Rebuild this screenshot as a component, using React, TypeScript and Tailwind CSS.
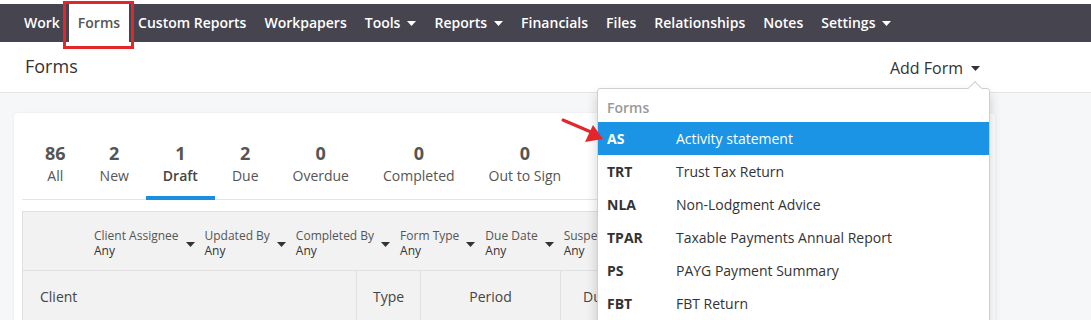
import React from 'react';

const Caret = ({ className = '' }: { className?: string }) => (
    <svg width="9" height="5" viewBox="0 0 9 5" className={className}>
        <path d="M0 0 L9 0 L4.5 5 Z" fill="currentColor" />
    </svg>
);

const navItems = [
    { label: 'Work' },
    { label: 'Forms', active: true },
    { label: 'Custom Reports' },
    { label: 'Workpapers' },
    { label: 'Tools', caret: true },
    { label: 'Reports', caret: true },
    { label: 'Financials' },
    { label: 'Files' },
    { label: 'Relationships' },
    { label: 'Notes' },
    { label: 'Settings', caret: true },
];

const tabs = [
    { n: '86', label: 'All' },
    { n: '2', label: 'New' },
    { n: '1', label: 'Draft', active: true },
    { n: '2', label: 'Due' },
    { n: '0', label: 'Overdue' },
    { n: '0', label: 'Completed' },
    { n: '0', label: 'Out to Sign' },
];

const filters = ['Client Assignee', 'Updated By', 'Completed By', 'Form Type', 'Due Date', 'Suspended'];

const forms = [
    { code: 'AS', name: 'Activity statement' },
    { code: 'TRT', name: 'Trust Tax Return' },
    { code: 'NLA', name: 'Non-Lodgment Advice' },
    { code: 'TPAR', name: 'Taxable Payments Annual Report' },
    { code: 'PS', name: 'PAYG Payment Summary' },
    { code: 'FBT', name: 'FBT Return' },
];

export default function App() {
    return (
        <div className="relative w-[1091px] h-[320px] overflow-hidden bg-[#f6f7f9] font-['Open_Sans',sans-serif] text-[#333]">
            {/* top nav */}
            <div className="h-[4px] bg-white" />
            <nav className="h-[38px] bg-[#45444f] flex items-stretch pl-[15px]">
                {navItems.map((item) => (
                    <div
                        key={item.label}
                        className={`flex items-center px-[9px] text-[14px] font-semibold -mt-[1px] ${item.active ? 'bg-white text-[#555]' : 'text-white'}`}
                    >
                        {item.label}
                        {item.caret && <Caret className="ml-[7px] mt-[1px]" />}
                    </div>
                ))}
            </nav>

            {/* page header */}
            <div className="h-[51px] bg-white border-b border-[#e3e3e3] flex items-center justify-between pl-[25px] pr-[111px]">
                <h1 className="text-[18px] text-[#333] -mt-[2px]">Forms</h1>
                <div className="flex items-center text-[16px] text-[#333] mt-[1px]">
                    Add Form
                    <Caret className="ml-[8px] mt-[1px]" />
                </div>
            </div>

            {/* card */}
            <div className="ml-[14px] mt-[20px] w-[981px] h-[260px] bg-white rounded-[4px] shadow-[0_0_3px_rgba(0,0,0,0.06)] px-[8px] pt-[28px]">
                <div className="flex border-b border-[#e4e4e4] pl-[6px]">
                    {tabs.map((t) => (
                        <div
                            key={t.label}
                            className={`flex flex-col items-center px-[17px] pb-[9px] border-b-[4px] -mb-[1px] ${t.active ? 'border-[#1a8fe0]' : 'border-transparent'}`}
                        >
                            <span className="text-[18px] font-bold leading-[24px] text-[#555]">{t.n}</span>
                            <span className={`text-[14px] leading-[22px] ${t.active ? 'font-semibold text-[#444]' : 'text-[#555]'}`}>{t.label}</span>
                        </div>
                    ))}
                </div>

                <div className="mt-[11px] border border-[#e0e0e0] bg-[#f2f2f2]">
                    <div className="h-[59px] flex items-center pl-[71px] pt-[4px] gap-[10px] border-b border-[#e0e0e0]">
                        {filters.map((f) => (
                            <div key={f} className="flex items-center leading-[15px]">
                                <div className="flex flex-col">
                                    <span className="text-[12px] text-[#555]">{f}</span>
                                    <span className="text-[12px] font-medium text-[#333]">Any</span>
                                </div>
                                <Caret className="ml-[7px] mt-[2px] text-[#333]" />
                            </div>
                        ))}
                    </div>
                    <div className="flex h-[50px] text-[14px] text-[#444]">
                        <div className="w-[334px] flex items-center pl-[17px] border-r border-[#e0e0e0]">Client</div>
                        <div className="w-[64px] flex items-center justify-center border-r border-[#e0e0e0]">Type</div>
                        <div className="w-[140px] flex items-center justify-center border-r border-[#e0e0e0]">Period</div>
                        <div className="flex items-center pl-[22px]">Due Date</div>
                    </div>
                </div>
            </div>

            {/* red annotation box around Forms tab */}
            <div className="absolute left-[63px] top-[1px] w-[71px] h-[48px] border-[3px] border-[#e3262b]" />

            {/* Add Form dropdown */}
            <div className="absolute left-[597px] top-[88px] w-[393px] h-[260px] bg-white border border-[#cfcfcf] rounded-[3px] shadow-[0_6px_12px_rgba(0,0,0,0.18)]">
                <div className="absolute -top-[6px] right-[9px] w-[10px] h-[10px] bg-white border-l border-t border-[#cfcfcf] rotate-45" />
                <div className="relative px-[9px] pt-[10px] pb-[5px] text-[14px] font-semibold text-[#999] leading-[18px]">Forms</div>
                {forms.map((f, i) => (
                    <div
                        key={f.code}
                        className={`flex items-center h-[33px] px-[9px] text-[14px] ${i === 0 ? 'bg-[#1b94e6] text-white' : 'text-[#333]'}`}
                    >
                        <span className="w-[69px] font-bold">{f.code}</span>
                        <span>{f.name}</span>
                    </div>
                ))}
            </div>

            {/* red arrow pointing at AS */}
            <svg className="absolute left-[555px] top-[110px]" width="52" height="38" viewBox="0 0 52 38">
                <line x1="8" y1="10" x2="36" y2="22" stroke="#e3262b" strokeWidth="3" strokeLinecap="round" />
                <path d="M48 29 L30 32 L38 15 Z" fill="#e3262b" />
            </svg>
        </div>
    );
}
